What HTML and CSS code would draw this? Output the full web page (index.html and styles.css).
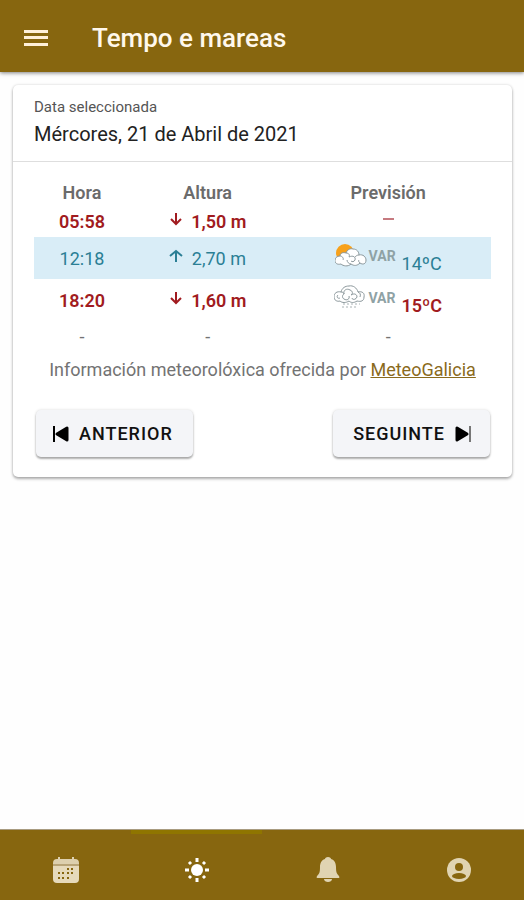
FILE: index.html
```html
<!DOCTYPE html>
<html lang="gl">
<head>
  <meta charset="UTF-8">
  <meta name="viewport" content="width=device-width, initial-scale=1.0">
  <title>Tempo e mareas</title>
  <link rel="stylesheet" href="styles.css">
</head>
<body>

  <header class="toolbar">
    <button class="menu-button" aria-label="Menú">
      <svg width="24" height="18" viewBox="0 0 24 18" fill="#fff0d8">
        <rect y="1" width="24" height="3"/>
        <rect y="7" width="24" height="3"/>
        <rect y="14" width="24" height="3"/>
      </svg>
    </button>
    <h1>Tempo e mareas</h1>
  </header>

  <main class="content">
    <section class="card">
      <div class="date-item">
        <label for="selectedDate">Data seleccionada</label>
        <input type="text" id="selectedDate" value="Mércores, 21 de Abril de 2021" readonly>
      </div>

      <div class="card-body">
        <table class="tides">
          <thead>
            <tr>
              <th class="col-hour">Hora</th>
              <th class="col-height">Altura</th>
              <th class="col-forecast">Previsión</th>
            </tr>
          </thead>
          <tbody>
            <tr class="low short">
              <td>05:58</td>
              <td>
                <svg class="arrow" width="14" height="16" viewBox="0 0 14 16"><path d="M7 1v11M2 7l5 5 5-5"/></svg>
                1,50 m
              </td>
              <td><span class="no-data"></span></td>
            </tr>
            <tr class="high">
              <td>12:18</td>
              <td>
                <svg class="arrow" width="14" height="16" viewBox="0 0 14 16"><path d="M7 13V2M1 7l6-5 6 5"/></svg>
                2,70 m
              </td>
              <td>
                <div class="forecast">
                  <svg width="32" height="24" viewBox="0 0 32 24">
                    <circle cx="10" cy="10" r="9" fill="#f7a11b"/>
                    <path d="M6 21C2 22 0 20 0 17.500C0 15 2 13 5 13C5 10 8 9 11 10C12 7 15 5 18 6C22 6 24 9 24 12C28 11 31 14 31 17C31 21 28 22 25 20C22 23 19 23 16 21C13 24 8 23 6 21Z" fill="#fff" stroke="#8c989c"/>
                    <path d="M5 13C7 13 9 15 8 17M11 10C14 10 15 12 14 14C18 12 21 14 20 17C19 19 17 19 16 18M24 12C22 12 21 13 20 14M25 20C24 19 23 18 24 17M16 21C14 21 12 19 12 17" fill="none" stroke="#8c989c"/>
                  </svg>
                  <span class="wind">VAR</span>
                  <span class="degrees">14ºC</span>
                </div>
              </td>
            </tr>
            <tr class="low">
              <td>18:20</td>
              <td>
                <svg class="arrow" width="14" height="16" viewBox="0 0 14 16"><path d="M7 1v11M2 7l5 5 5-5"/></svg>
                1,60 m
              </td>
              <td>
                <div class="forecast">
                  <svg width="32" height="24" viewBox="0 0 32 24">
                    <path d="M6 16C3 17 0 15 0 12C0 8 3 6 7 7C8 3 11 1 15 1C19 0 23 3 24 7C28 6 31 8 30 12C30 16 27 17 23 16C20 18 17 18 15 16C12 18 8 18 6 16Z" fill="#fff" stroke="#8c989c"/>
                    <path d="M7 7C9 7 10 8 10 9C9 5 13 3 16 5C19 6 19 9 17 10M10 9C8 10 8 13 10 14C13 16 16 14 15 11M17 10C20 8 23 9 23 12C22 15 18 15 18 13M24 7C26 8 27 9 26 12M4 10C2 12 4 14 6 13" fill="none" stroke="#8c989c"/>
                    <path d="M9 19h17M8 22h15" fill="none" stroke="#a9b2b5" stroke-dasharray="2 2"/>
                  </svg>
                  <span class="wind">VAR</span>
                  <span class="degrees">15ºC</span>
                </div>
              </td>
            </tr>
            <tr class="empty">
              <td>-</td>
              <td>-</td>
              <td>-</td>
            </tr>
          </tbody>
        </table>

        <p class="credit">Información meteorolóxica ofrecida por <a href="#">MeteoGalicia</a></p>

        <div class="buttons">
          <button class="nav-button">
            <svg width="16" height="18" viewBox="0 0 16 18"><path d="M14 3v12L4 9z" stroke="#000" stroke-width="3" stroke-linejoin="round"/><path d="M0 1h2v16H0z"/></svg>
            ANTERIOR
          </button>
          <button class="nav-button">
            SEGUINTE
            <svg width="16" height="18" viewBox="0 0 16 18"><path d="M14 1h2v16h-2z" fill="#777"/><path d="M2 3v12l10-6z" stroke="#000" stroke-width="3" stroke-linejoin="round"/></svg>
          </button>
        </div>
      </div>
    </section>
  </main>

  <nav class="tab-bar">
    <a class="tab" href="#" aria-label="Calendario">
      <svg width="26" height="26" viewBox="0 0 26 26">
        <path d="M5 0h2v2h12V0h2v2h1a4 4 0 0 1 4 4v1H0V6a4 4 0 0 1 4-4h1z" fill="#ddd0ae"/>
        <path d="M0 7h26v2H0z" fill="#b8a477"/>
        <path d="M0 9h26v13a4 4 0 0 1-4 4H4a4 4 0 0 1-4-4z" fill="#e6dabb"/>
        <g fill="#87660f">
          <path d="M14 11h2v2h-2zM18 11h2v2h-2zM5 15h2v2H5zM9 15h2v2H9zM14 15h2v2h-2zM18 15h2v2h-2zM5 20h2v2H5zM9 20h2v2H9zM14 20h2v2h-2z"/>
        </g>
      </svg>
    </a>
    <a class="tab active" href="#" aria-label="Tempo">
      <svg width="26" height="26" viewBox="0 0 26 26">
        <circle cx="13" cy="13" r="6" fill="#fff"/>
        <path d="M13 1v4M13 21v4M1 13h4M21 13h4M5 5l2 2M19 19l2 2M5 21l2-2M19 7l2-2" stroke="#fff" stroke-width="3"/>
      </svg>
    </a>
    <a class="tab" href="#" aria-label="Avisos">
      <svg width="26" height="26" viewBox="0 0 26 26" fill="#e0d4b2">
        <path d="M13 0c2 0 3 1 3 2 4 1 5 5 5 8 0 6 1 7 3 9 1 2 0 2-1 2H3c-1 0-2 0-1-2 2-2 3-3 3-9 0-3 1-7 5-8 0-1 1-2 3-2z"/>
        <path d="M9 22h8c0 2-2 3-4 3s-4-1-4-3z"/>
      </svg>
    </a>
    <a class="tab" href="#" aria-label="Perfil">
      <svg width="26" height="26" viewBox="0 0 26 26">
        <circle cx="13" cy="13" r="12" fill="#e0d4b2"/>
        <circle cx="13" cy="10" r="4" fill="#87660f"/>
        <ellipse cx="13" cy="19" rx="7" ry="3" fill="#87660f"/>
      </svg>
    </a>
  </nav>

</body>
</html>
```
FILE: styles.css
```css
* {
  box-sizing: border-box;
}

body {
  margin: 0;
  min-height: 100vh;
  display: flex;
  flex-direction: column;
  background-color: #fefefe;
  font-family: Roboto, "Liberation Sans", sans-serif;
  font-size: 18px;
  color: #737373;
}

.toolbar {
  display: flex;
  align-items: center;
  gap: 44px;
  padding: 22px 24px 18px;
  background-color: #87660f;
  box-shadow: 0 1px 4px rgba(0, 0, 0, 0.5);
}

.toolbar h1 {
  margin: 0;
  font-size: 26px;
  font-weight: 500;
  line-height: 32px;
  color: #fff8ec;
}

.menu-button {
  display: flex;
  padding: 0;
  border: none;
  background: transparent;
  cursor: pointer;
}

.content {
  flex-grow: 1;
  padding: 13px 12px 13px 13px;
}

.card {
  border-radius: 5px;
  background-color: #fff;
  box-shadow: 0 2px 3px rgba(0, 0, 0, 0.3), 0 0 3px rgba(0, 0, 0, 0.15);
}

.date-item {
  display: flex;
  flex-direction: column;
  padding: 12px 21px;
  border-bottom: 1px solid #dedede;
}

.date-item label {
  font-size: 15px;
  line-height: 20px;
  color: #555;
}

.date-item input {
  width: 100%;
  height: 32px;
  padding: 2px 0 0;
  border: none;
  outline: none;
  background: transparent;
  font-family: inherit;
  font-size: 20px;
  color: #222;
}

.card-body {
  padding: 15px 21px 20px;
}

.tides {
  width: 100%;
  border-collapse: collapse;
  table-layout: fixed;
  text-align: center;
}

.tides th,
.tides td {
  height: 42px;
  padding: 0;
  font-size: 18px;
}

.tides th {
  height: 30px;
  font-weight: 600;
  color: #6b6b6b;
}

.tides .short td,
.tides .empty td {
  height: 30px;
}

.tides .short td {
  padding-bottom: 2px;
}

.col-hour {
  width: 21%;
}

.col-height {
  width: 34%;
}

.low {
  font-weight: 600;
  color: #a11b20;
}

.high {
  background-color: #d9edf7;
  color: #2b7f95;
}

.arrow {
  margin-right: 4px;
  fill: none;
  stroke: currentColor;
  stroke-width: 2;
}

.no-data {
  display: inline-block;
  width: 11px;
  height: 2px;
  margin-bottom: 8px;
  background-color: #c67a80;
  vertical-align: middle;
}

.forecast {
  display: flex;
  justify-content: center;
  align-items: flex-start;
  height: 32px;
  margin-top: 2px;
}

.wind {
  margin-left: 2px;
  font-size: 14px;
  font-weight: 700;
  line-height: 26px;
  color: #8fa2a5;
}

.degrees {
  align-self: flex-end;
  margin-left: 6px;
  line-height: 22px;
}

.credit {
  margin: 7px 0 0;
  font-size: 18px;
  line-height: 24px;
  text-align: center;
}

.credit a {
  color: #8a6a1c;
}

.buttons {
  display: flex;
  justify-content: space-between;
  padding: 28px 1px 0 2px;
}

.nav-button {
  display: flex;
  align-items: center;
  gap: 10px;
  height: 47px;
  padding: 0 20px 0 17px;
  border: none;
  border-radius: 5px;
  background-color: #f4f5f8;
  box-shadow: 0 2px 2px rgba(0, 0, 0, 0.3), 0 0 3px rgba(0, 0, 0, 0.15);
  font-family: inherit;
  font-size: 18px;
  font-weight: 500;
  letter-spacing: 1px;
  color: #111;
  cursor: pointer;
}

.nav-button:last-child {
  padding: 0 19px 0 20px;
}

.tab-bar {
  display: flex;
  border-top: 1px solid #a89b80;
  background-color: #87660f;
}

.tab {
  flex: 1;
  display: flex;
  justify-content: center;
  padding: 23px 0 17px;
  border-top: 4px solid transparent;
}

.tab.active {
  border-top-color: #8f7500;
}
```
